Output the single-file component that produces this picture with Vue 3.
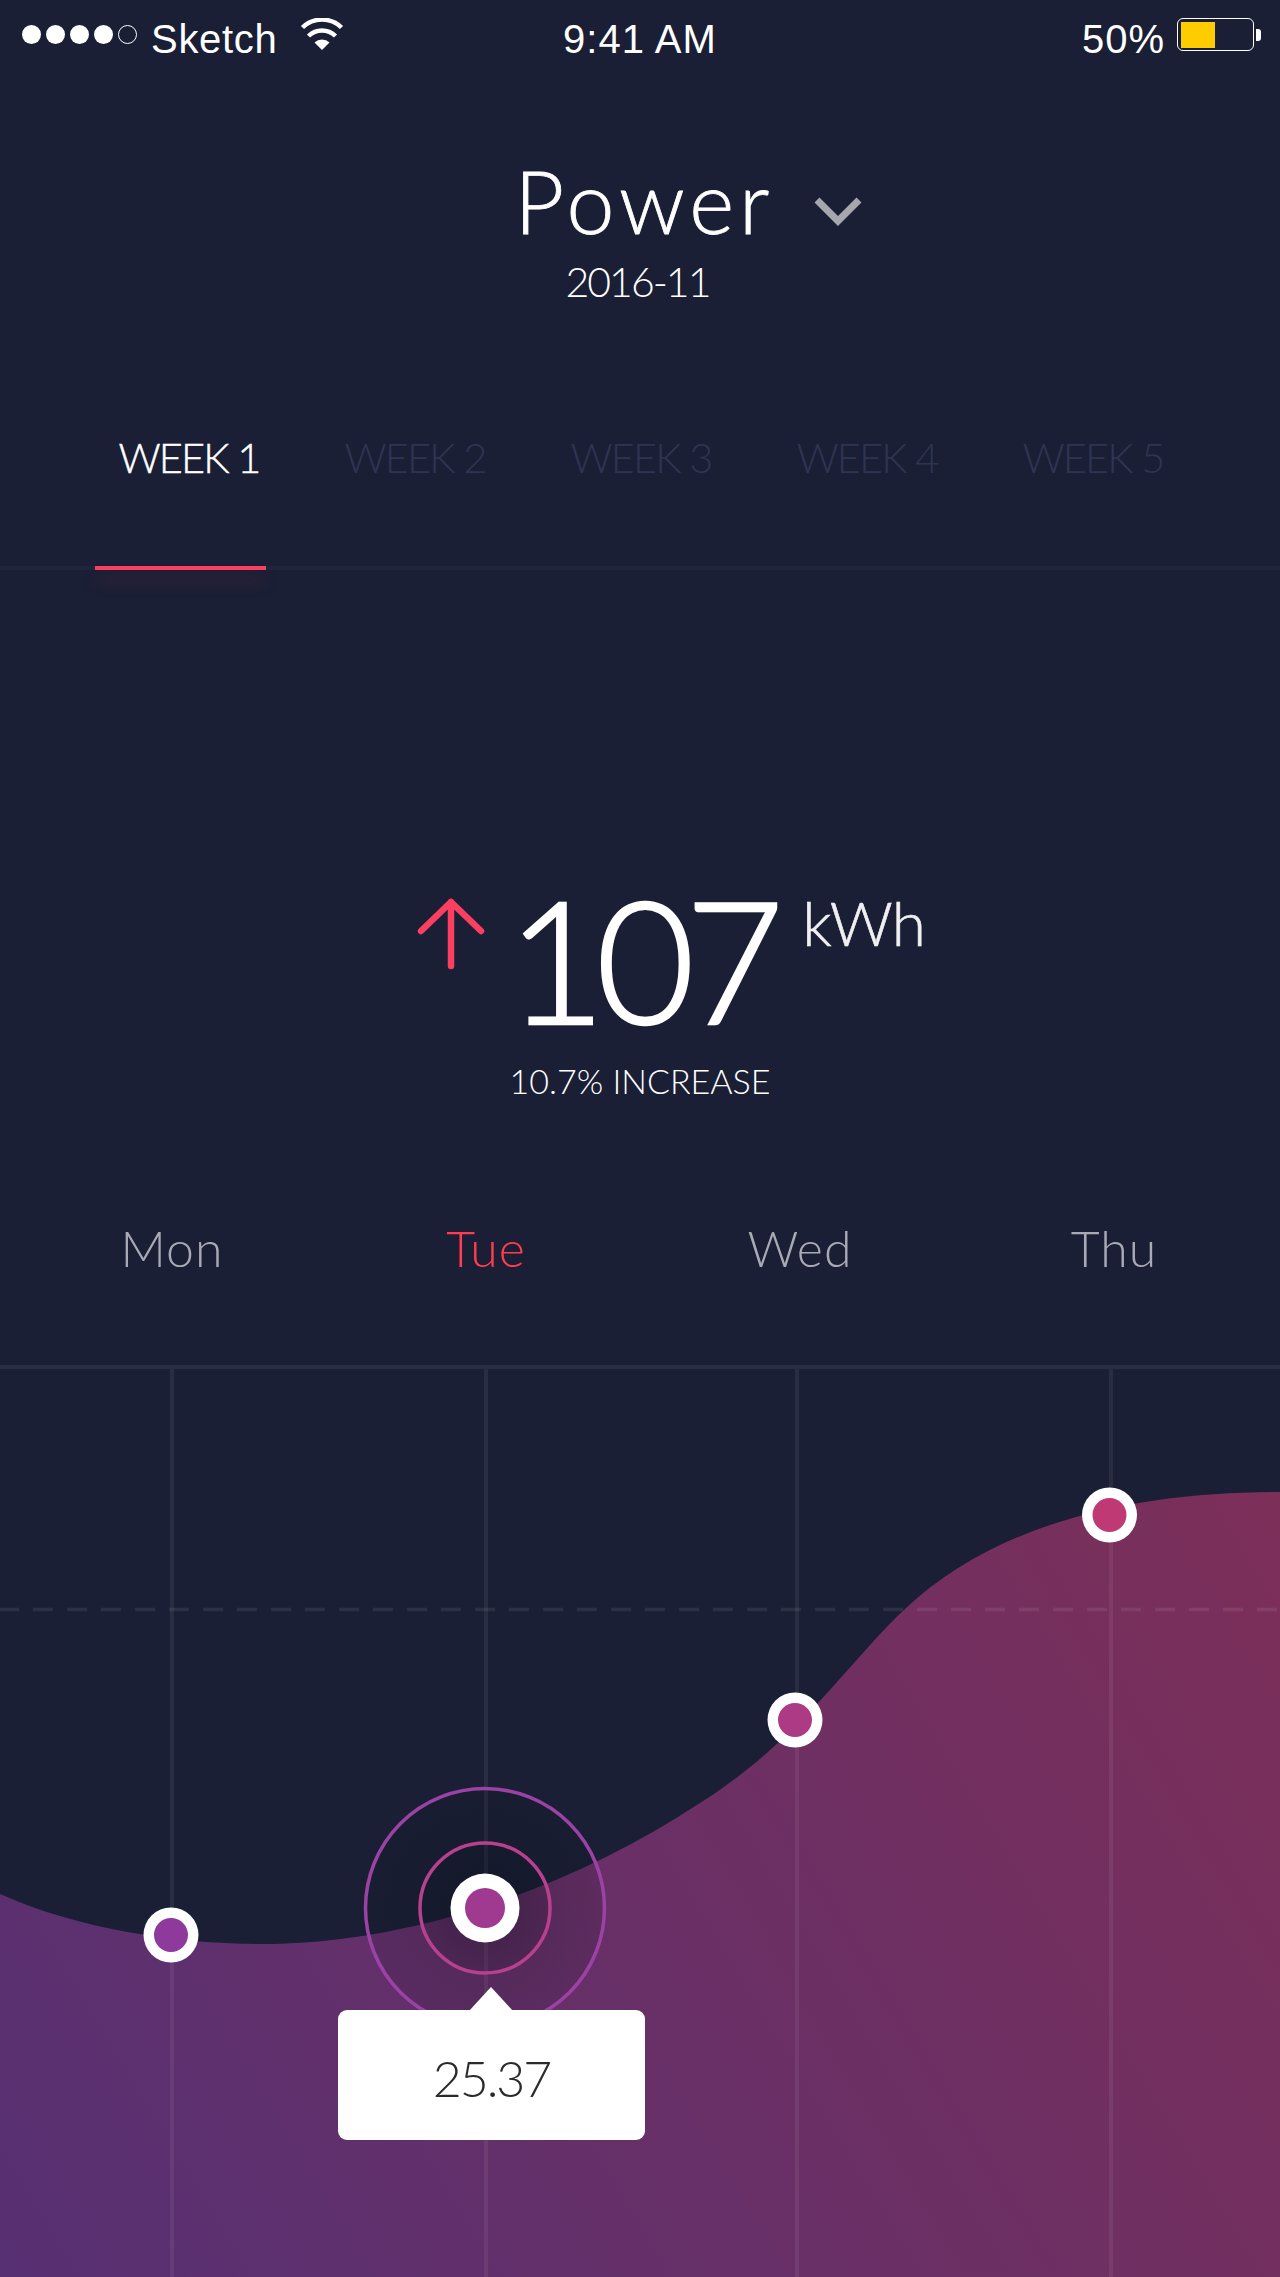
<script setup>
const tabs = ['WEEK 1', 'WEEK 2', 'WEEK 3', 'WEEK 4', 'WEEK 5']
const days = ['Mon', 'Tue', 'Wed', 'Thu']
const grid = [172, 486, 797, 1111]
const points = [
  { x: 171, y: 1935, c: '#8e3a9c' },
  { x: 795, y: 1720, c: '#ad3a85' },
  { x: 1109.5, y: 1515, c: '#bf3a75' }
]
</script>

<template>
  <div class="screen">
    <div class="status">
      <div class="status-left">
        <div class="signal">
          <i v-for="n in 4" :key="n" class="dot"></i>
          <i class="dot hollow"></i>
        </div>
        <span class="carrier">Sketch</span>
        <svg class="wifi" viewBox="0 0 44 32" width="44" height="32">
          <path d="M22 32 L14.5 24.5 A11 11 0 0 1 29.500 24.500 Z" fill="#fff" />
          <path d="M8.500 18 A19.500 19.500 0 0 1 35.500 18" fill="none" stroke="#fff" stroke-width="4.500" />
          <path d="M2.500 9.500 A28 28 0 0 1 41.500 9.500" fill="none" stroke="#fff" stroke-width="4.500" />
        </svg>
      </div>
      <span class="time">9:41 AM</span>
      <div class="status-right">
        <span class="percent">50%</span>
        <div class="battery"><div class="battery-fill"></div></div>
        <div class="battery-tip"></div>
      </div>
    </div>

    <header class="head">
      <div class="title-row">
        <h1 class="title">Power</h1>
        <svg class="chevron" viewBox="0 0 48 30" width="48" height="30">
          <path d="M3 3 L24 24 L45 3" fill="none" stroke="#a5a7ad" stroke-width="7" />
        </svg>
      </div>
      <div class="date">2016-11</div>
    </header>

    <nav class="tabs">
      <span v-for="(t, i) in tabs" :key="t" class="tab" :class="{ on: i === 0 }">{{ t }}</span>
    </nav>
    <div class="tabs-line"><div class="tabs-active"></div></div>

    <section class="hero">
      <div class="hero-row">
        <svg class="arrow" viewBox="0 0 68 72" width="68" height="72">
          <path d="M34 68 V4 M4 33 L34 4 L64 33" fill="none" stroke="#fb3f60" stroke-width="6.500" stroke-linecap="round" stroke-linejoin="round" />
        </svg>
        <span class="value">107</span>
        <span class="unit">kWh</span>
      </div>
      <div class="change">10.7% INCREASE</div>
    </section>

    <div class="days">
      <span v-for="d in days" :key="d" class="day" :class="{ on: d === 'Tue' }">{{ d }}</span>
    </div>

    <div class="chart">
      <svg class="plot" viewBox="0 1365 1280 912" width="1280" height="912">
        <defs>
          <linearGradient id="area" gradientUnits="userSpaceOnUse" x1="0" y1="2277" x2="1280" y2="1500">
            <stop offset="0" stop-color="#573073" />
            <stop offset="1" stop-color="#7c2f59" />
          </linearGradient>
          <radialGradient id="halo" cx="0.5" cy="0.5" r="0.5">
            <stop offset="0" stop-color="#0c0e1c" stop-opacity="0.25" />
            <stop offset="1" stop-color="#0c0e1c" stop-opacity="0.12" />
          </radialGradient>
        </defs>
        <path class="area" d="M0 1894 C80 1930 180 1944 261 1944 C400 1944 560 1895 700 1803 C800 1740 850 1660 905 1609 C1000 1520 1140 1492 1280 1492 V2277 H0 Z" />
        <rect class="rule" x="0" y="1365" width="1280" height="4" />
        <rect v-for="x in grid" :key="x" class="rule" :x="x - 2" y="1369" width="4" height="908" />
        <line class="dash" x1="0" x2="1280" y1="1609.5" y2="1609.5" />
        <circle class="halo" cx="485" cy="1908" r="119" />
        <circle class="halo" cx="485" cy="1908" r="65" />
        <circle class="ring-outer" cx="485" cy="1908" r="119.500" />
        <circle class="ring-inner" cx="485" cy="1908" r="65" />
        <g v-for="p in points" :key="p.x">
          <circle :cx="p.x" :cy="p.y" r="27.500" fill="#fff" />
          <circle :cx="p.x" :cy="p.y" r="17" :fill="p.c" />
        </g>
        <circle cx="485" cy="1908" r="34.500" fill="#fff" />
        <circle cx="485" cy="1908" r="20" fill="#a03a90" />
      </svg>
      <div class="tooltip"><span class="tooltip-text">25.37</span></div>
    </div>
  </div>
</template>

<style>
html, body { margin: 0; background: #1a1f35; }
</style>

<style scoped>
.screen {
  width: 1280px;
  height: 2277px;
  overflow: hidden;
  background: #1a1f35;
  color: #fff;
  font-family: "Lato", "Liberation Sans", sans-serif;
  font-weight: 300;
}
.status {
  height: 76px;
  display: grid;
  grid-template-columns: 1fr auto 1fr;
  align-items: start;
  font-family: "Liberation Sans", sans-serif;
  font-weight: 400;
  font-size: 40px;
  line-height: 46px;
  padding-top: 16px;
  box-sizing: border-box;
}
.status-left { display: flex; align-items: flex-start; padding-left: 22px; }
.signal { display: flex; gap: 5px; margin-top: 9px; }
.dot { display: block; width: 19px; height: 19px; border-radius: 50%; background: #fff; }
.dot.hollow { background: none; border: 1.5px solid #fff; box-sizing: border-box; }
.carrier { margin-left: 14px; letter-spacing: 0.7px; }
.wifi { margin: 2px 0 0 22px; }
.time { letter-spacing: 1px; }
.status-right { display: flex; align-items: flex-start; justify-content: flex-end; padding-right: 19px; }
.percent { margin-right: 12px; letter-spacing: 1px; }
.battery {
  margin-top: 2px;
  width: 77px;
  height: 33px;
  border: 1.5px solid #fff;
  border-radius: 6px;
  box-sizing: border-box;
  padding: 2.5px;
}
.battery-fill { width: 34px; height: 100%; background: #ffcc00; }
.battery-tip { margin: 13px 0 0 1.5px; width: 5.500px; height: 12px; background: #fff; border-radius: 0 3px 3px 0; }

.head { display: flex; flex-direction: column; align-items: center; }
.title-row { display: flex; align-items: center; height: 116px; padding-left: 96px; margin-top: 67px; }
.title { margin: 0; font-size: 86px; font-weight: 300; line-height: 116px; letter-spacing: 5px; -webkit-text-stroke: 0.8px #fff; }
.chevron { margin: 22px 0 0 39px; }
.date { font-size: 41px; line-height: 50px; margin-top: -2px; letter-spacing: -2px; padding-right: 5px; }

.tabs {
  display: grid;
  grid-template-columns: repeat(5, 226px);
  padding-left: 76px;
  margin-top: 118px;
  height: 64px;
  font-size: 41.5px;
  line-height: 64px;
  letter-spacing: -1.8px;
  text-align: center;
  color: #2f3452;
}
.tab.on { color: #fff; -webkit-text-stroke: 0.4px #fff; }
.tabs-line { margin-top: 77px; height: 4px; background: #20253b; }
.tabs-active {
  margin-left: 95px;
  width: 171px;
  height: 4px;
  background: #fb3f60;
  box-shadow: 0 12px 16px rgba(251, 63, 96, 0.18);
}

.hero { padding-top: 318px; }
.hero-row { display: flex; align-items: flex-start; padding-left: 417px; height: 140px; }
.arrow { margin-top: 10px; }
.value { margin-left: 22px; font-size: 170px; line-height: 140px; letter-spacing: -9.5px; font-weight: 300; -webkit-text-stroke: 2.5px #fff; }
.unit { margin-left: 28px; font-size: 62px; line-height: 70px; margin-top: -1px; letter-spacing: -1px; color: #f0f0f0; -webkit-text-stroke: 0.6px #f0f0f0; }
.change { text-align: center; font-size: 34px; line-height: 40px; margin-top: 33px; }

.days {
  display: grid;
  grid-template-columns: repeat(4, 314px);
  padding-left: 15px;
  margin-top: 117px;
  font-size: 50px;
  line-height: 60px;
  letter-spacing: 1px;
  text-align: center;
  color: #a9aab4;
}
.day.on { color: #ff3c50; }

.chart { position: relative; margin-top: 87px; height: 912px; }
.plot { display: block; }
.area { fill: url(#area); }
.rule { fill: rgba(255, 255, 255, 0.065); }
.dash { stroke: rgba(255, 255, 255, 0.08); stroke-width: 3.500; stroke-dasharray: 20 14; stroke-dashoffset: 1; }
.halo { fill: url(#halo); }
.ring-outer { fill: none; stroke: #9b42a5; stroke-width: 3.500; }
.ring-inner { fill: none; stroke: #b8408f; stroke-width: 3.500; }
.tooltip {
  position: absolute;
  left: 338px;
  top: 645px;
  width: 307px;
  height: 130px;
  box-sizing: border-box;
  padding-top: 6px;
  background: #fff;
  border-radius: 9px;
  display: flex;
  align-items: center;
  justify-content: center;
  color: #2a2a2a;
  font-size: 50px;
  font-weight: 300;
  letter-spacing: -2px;
}
.tooltip::before {
  content: "";
  position: absolute;
  left: 131px;
  top: -23px;
  width: 0;
  height: 0;
  border-left: 22px solid transparent;
  border-right: 22px solid transparent;
  border-bottom: 24px solid #fff;
}
</style>
